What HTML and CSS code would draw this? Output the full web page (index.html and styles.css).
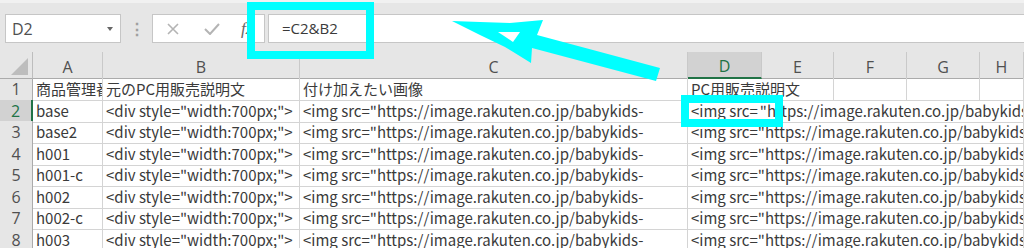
FILE: index.html
```html
<!DOCTYPE html>
<html>

<head>
    <meta charset="UTF-8">
    <title>Sheet</title>
    <link rel="stylesheet" href="styles.css">
</head>

<body>
    <div class="sheet">
        <!-- formula bar -->
        <div class="toolbar">
            <div class="name-box"><span>D2</span><span class="caret"></span></div>
            <div class="grip">⋮</div>
            <div class="fx-buttons">
                <svg class="btn" width="14" height="12" viewBox="0 0 14 12">
                    <path d="M2 1 L12 11 M12 1 L2 11" stroke="#b4b4b4" stroke-width="1.6" fill="none" />
                </svg>
                <svg class="btn" width="16" height="12" viewBox="0 0 16 12">
                    <path d="M1 6 L6 11 L15 1" stroke="#b4b4b4" stroke-width="2" fill="none" />
                </svg>
                <span class="fx">fx</span>
            </div>
            <div class="formula">=C2&amp;B2</div>
        </div>

        <!-- cells -->
        <div class="grid">
            <div class="row head">
                <div class="corner"><span class="tri"></span></div>
                <div class="ch">A</div>
                <div class="ch">B</div>
                <div class="ch">C</div>
                <div class="ch sel">D</div>
                <div class="ch">E</div>
                <div class="ch">F</div>
                <div class="ch">G</div>
                <div class="ch">H</div>
            </div>
            <div class="row">
                <div class="rh">1</div>
                <div class="cell">商品管理番号</div>
                <div class="cell">元のPC用販売説明文</div>
                <div class="cell">付け加えたい画像</div>
                <div class="cell span2">PC用販売説明文</div>
                <div class="cell"></div>
                <div class="cell"></div>
                <div class="cell"></div>
            </div>
            <div class="row">
                <div class="rh sel">2</div>
                <div class="cell">base</div>
                <div class="cell">&lt;div style="width:700px;"&gt;</div>
                <div class="cell">&lt;img src="https://image.rakuten.co.jp/babykids-</div>
                <div class="cell span5">&lt;img src=<span class="cursor"></span>"https://image.rakuten.co.jp/babykids-</div>
            </div>
            <div class="row">
                <div class="rh">3</div>
                <div class="cell">base2</div>
                <div class="cell">&lt;div style="width:700px;"&gt;</div>
                <div class="cell">&lt;img src="https://image.rakuten.co.jp/babykids-</div>
                <div class="cell span5">&lt;img src="https://image.rakuten.co.jp/babykids-</div>
            </div>
            <div class="row">
                <div class="rh">4</div>
                <div class="cell">h001</div>
                <div class="cell">&lt;div style="width:700px;"&gt;</div>
                <div class="cell">&lt;img src="https://image.rakuten.co.jp/babykids-</div>
                <div class="cell span5">&lt;img src="https://image.rakuten.co.jp/babykids-</div>
            </div>
            <div class="row">
                <div class="rh">5</div>
                <div class="cell">h001-c</div>
                <div class="cell">&lt;div style="width:700px;"&gt;</div>
                <div class="cell">&lt;img src="https://image.rakuten.co.jp/babykids-</div>
                <div class="cell span5">&lt;img src="https://image.rakuten.co.jp/babykids-</div>
            </div>
            <div class="row">
                <div class="rh">6</div>
                <div class="cell">h002</div>
                <div class="cell">&lt;div style="width:700px;"&gt;</div>
                <div class="cell">&lt;img src="https://image.rakuten.co.jp/babykids-</div>
                <div class="cell span5">&lt;img src="https://image.rakuten.co.jp/babykids-</div>
            </div>
            <div class="row">
                <div class="rh">7</div>
                <div class="cell">h002-c</div>
                <div class="cell">&lt;div style="width:700px;"&gt;</div>
                <div class="cell">&lt;img src="https://image.rakuten.co.jp/babykids-</div>
                <div class="cell span5">&lt;img src="https://image.rakuten.co.jp/babykids-</div>
            </div>
            <div class="row">
                <div class="rh">8</div>
                <div class="cell">h003</div>
                <div class="cell">&lt;div style="width:700px;"&gt;</div>
                <div class="cell">&lt;img src="https://image.rakuten.co.jp/babykids-</div>
                <div class="cell span5">&lt;img src="https://image.rakuten.co.jp/babykids-</div>
            </div>
        </div>

        <!-- cyan annotations drawn on top -->
        <svg class="marks" width="1024" height="248" viewBox="0 0 1024 248">
            <rect x="251" y="6" width="119" height="49" fill="none" stroke="#00ffff" stroke-width="8" />
            <rect x="685" y="99" width="94" height="24" fill="none" stroke="#00ffff" stroke-width="8" />
            <polygon fill="#00ffff"
                points="452,21 480,22 510,23 543,20 537,35 660,68 656,81 532,48 531,63 505,47 480,35" />
            <polygon fill="#ffffff" points="498,32 520,32 513,42" />
        </svg>
    </div>
</body>

</html>
```

FILE: styles.css
```css
body {
    margin: 0;
    background-color: #ffffff;
    font-family: "Noto Sans CJK JP", "Noto Sans", sans-serif;
}

.sheet {
    position: relative;
    width: 1024px;
    height: 248px;
    overflow: hidden;
}

/* formula bar */
.toolbar {
    height: 52px;
    box-sizing: border-box;
    background-color: #e6e6e6;
    border-top: 3px solid #f1f1f1;
    display: flex;
    align-items: flex-start;
    padding: 11px 0 0 5px;
}

.name-box {
    width: 116px;
    height: 29px;
    box-sizing: border-box;
    background-color: #ffffff;
    border: 1px solid #c6c6c6;
    display: flex;
    align-items: center;
    padding: 0 7px 0 6px;
    font-family: "Open Sans", sans-serif;
    font-size: 16px;
    color: #505050;
}

.caret {
    margin-left: auto;
    border-left: 3px solid transparent;
    border-right: 3px solid transparent;
    border-top: 4px solid #666666;
}

.grip {
    width: 31px;
    height: 29px;
    text-align: center;
    line-height: 29px;
    color: #a0a0a0;
    font-size: 16px;
    font-weight: bold;
}

.fx-buttons {
    width: 113px;
    height: 29px;
    box-sizing: border-box;
    background-color: #ffffff;
    border: 1px solid #c6c6c6;
    display: flex;
    align-items: center;
    padding-left: 13px;
}

.fx-buttons .btn {
    margin-right: 24px;
}

.fx {
    margin-left: -3px;
    font-family: "Liberation Serif", serif;
    font-style: italic;
    font-size: 17px;
    color: #666666;
}

.formula {
    flex: 1;
    margin-left: 3px;
    height: 29px;
    box-sizing: border-box;
    background-color: #ffffff;
    border: 1px solid #c6c6c6;
    border-right: none;
    padding-left: 13px;
    line-height: 27px;
    font-family: "Open Sans", sans-serif;
    font-size: 15px;
    color: #3a3a3a;
}

/* cells */
.row {
    display: grid;
    grid-template-columns: 33px 70px 197px 388px 74px 72px 73px 73px 1fr;
    height: 21.5px;
}

.row.head {
    height: 26px;
}

.corner,
.ch,
.rh {
    box-sizing: border-box;
    background-color: #e6e6e6;
    color: #505050;
    font-family: "Open Sans", sans-serif;
    font-size: 16px;
    display: flex;
    align-items: center;
    justify-content: center;
}

.corner {
    position: relative;
    border-right: 1px solid #bdbdbd;
    border-bottom: 1px solid #ababab;
}

.tri {
    position: absolute;
    right: 4px;
    bottom: 3px;
    border-left: 17px solid transparent;
    border-bottom: 17px solid #bdbdbd;
}

.ch {
    border-right: 1px solid #c9c9c9;
    border-bottom: 1px solid #ababab;
    padding-top: 3px;
}

.ch.sel {
    background-color: #d2d2d2;
    color: #217346;
    border-bottom: 2px solid #217346;
}

.rh {
    border-right: 1px solid #ababab;
    border-bottom: 1px solid #d4d4d4;
}

.rh.sel {
    background-color: #d2d2d2;
    color: #217346;
    border-right: 2px solid #217346;
}

.cell {
    box-sizing: border-box;
    border-right: 1px solid #d4d4d4;
    border-bottom: 1px solid #d4d4d4;
    padding: 0 3px 1px;
    font-size: 15px;
    line-height: 20px;
    color: #3a3a3a;
    white-space: nowrap;
    overflow: hidden;
    display: flex;
    align-items: flex-end;
}

.span2 {
    grid-column: span 2;
}

.span5 {
    grid-column: span 5;
}

.cursor {
    display: inline-block;
    width: 2px;
    height: 16px;
    margin: 0 1px 2px;
    background-color: #1e3a2a;
}

.marks {
    position: absolute;
    top: 0;
    left: 0;
    pointer-events: none;
}
```
